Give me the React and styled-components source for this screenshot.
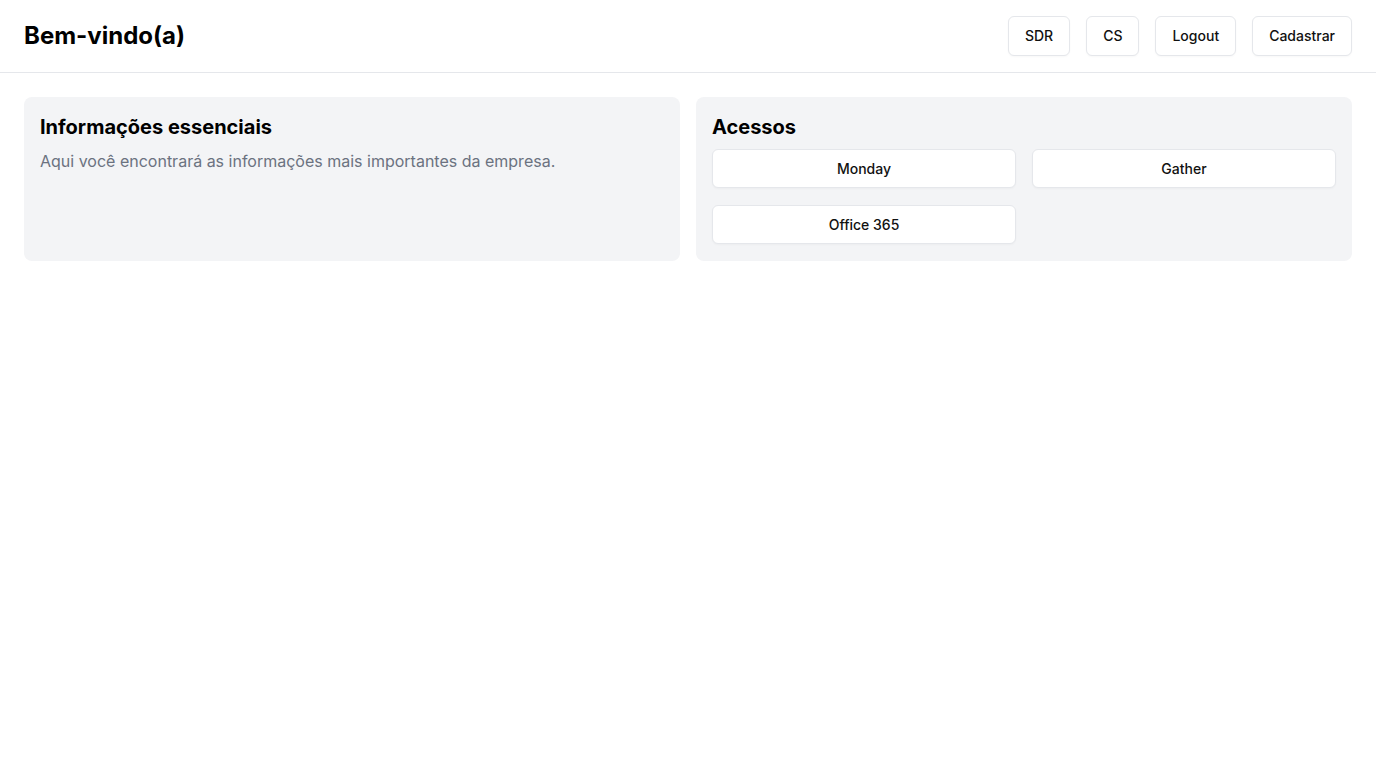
import React from 'react';
import styled, { createGlobalStyle } from 'styled-components';

const GlobalStyle = createGlobalStyle`
    * { box-sizing: border-box; }
    body {
        margin: 0;
        background: #ffffff;
        font-family: Inter, "Noto Sans", sans-serif;
        color: #000;
    }
`;

const Header = styled.header`
    display: flex;
    align-items: center;
    justify-content: space-between;
    height: 73px;
    padding: 0 24px 1px;
    border-bottom: 1px solid #e5e7eb;
`;

const Title = styled.h1`
    margin: 0;
    font-size: 24px;
    line-height: 32px;
    font-weight: 700;
`;

const Nav = styled.nav`
    display: flex;
    gap: 16px;
`;

const Button = styled.button`
    height: ${p => p.$tall ? '40px' : '39px'};
    padding: 0 16px;
    background: #fff;
    border: 1px solid #e5e7eb;
    border-radius: 6px;
    font-family: inherit;
    font-size: 14px;
    line-height: 20px;
    font-weight: 500;
    color: #111;
    cursor: pointer;
    box-shadow: 0 1px 2px rgba(0, 0, 0, 0.03);
`;

const Main = styled.main`
    display: grid;
    grid-template-columns: 1fr 1fr;
    gap: 16px;
    padding: 24px;
`;

const Card = styled.section`
    background: #f3f4f6;
    border-radius: 8px;
    padding: 16px;
`;

const CardTitle = styled.h2`
    margin: 0 0 8px;
    font-size: 20px;
    line-height: 28px;
    font-weight: 700;
`;

const Text = styled.p`
    margin: 0;
    font-size: 16px;
    line-height: 24px;
    color: #6b7280;
`;

const LinkGrid = styled.div`
    display: grid;
    grid-template-columns: 1fr 1fr;
    gap: 17px 16px;
    padding-bottom: 1px;
`;

const links = ['Monday', 'Gather', 'Office 365'];

export default function App() {
    return (
        <>
            <GlobalStyle />
            <Header>
                <Title>Bem-vindo(a)</Title>
                <Nav>
                    <Button $tall>SDR</Button>
                    <Button $tall>CS</Button>
                    <Button $tall>Logout</Button>
                    <Button $tall>Cadastrar</Button>
                </Nav>
            </Header>
            <Main>
                <Card>
                    <CardTitle>Informações essenciais</CardTitle>
                    <Text>Aqui você encontrará as informações mais importantes da empresa.</Text>
                </Card>
                <Card>
                    <CardTitle>Acessos</CardTitle>
                    <LinkGrid>
                        {links.map(l => <Button key={l}>{l}</Button>)}
                    </LinkGrid>
                </Card>
            </Main>
        </>
    );
}
